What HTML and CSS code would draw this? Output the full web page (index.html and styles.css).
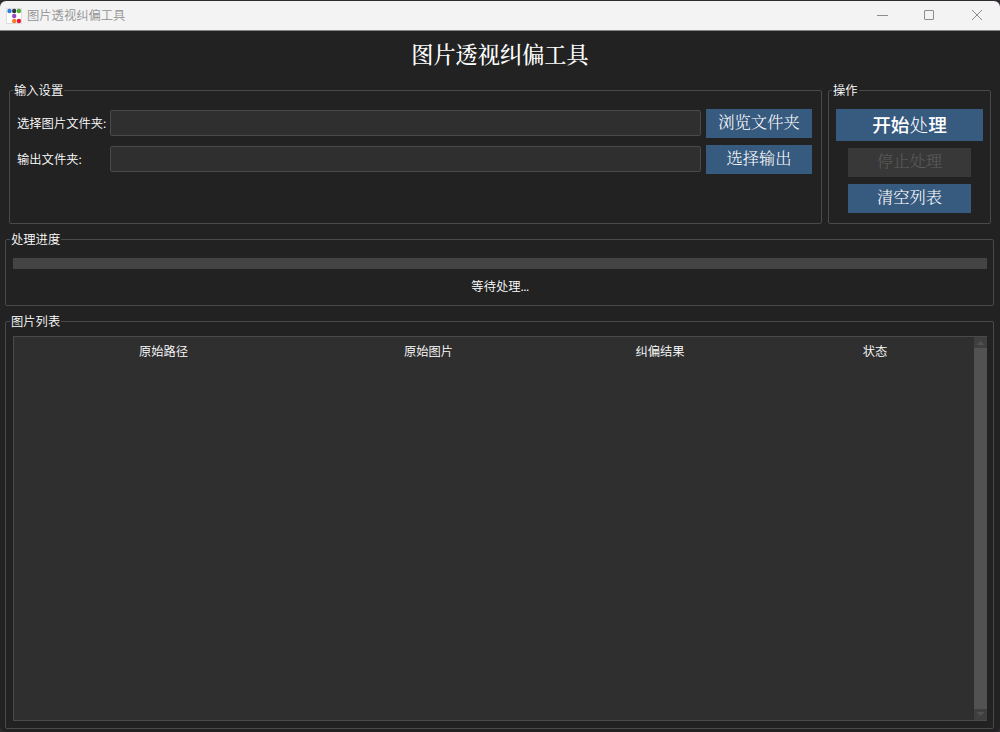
FILE: index.html
```html
<!DOCTYPE html>
<html lang="zh">
  <head>
    <meta charset="UTF-8" />
    <title>图片透视纠偏工具</title>
    <link rel="stylesheet" href="styles.css">
  </head>
  <body>
    <div class="window">
      <div class="titlebar">
        <svg class="logo" width="16" height="16" viewBox="0 0 16 16">
          <rect x="0.5" y="0.5" width="15" height="15" fill="#fff" stroke="#dedede" />
          <circle cx="3.5" cy="3" r="2.2" fill="#2f7de0" />
          <circle cx="8.2" cy="3" r="2.2" fill="#303840" />
          <circle cx="12.9" cy="3" r="2.2" fill="#4cae35" />
          <circle cx="8.2" cy="8" r="2.2" fill="#924ac0" />
          <circle cx="8.2" cy="13" r="2.2" fill="#f77a26" />
          <circle cx="12.9" cy="13" r="2.2" fill="#ed1535" />
        </svg>
        <span class="caption">图片透视纠偏工具</span>
        <svg class="controls" width="110" height="14" viewBox="0 0 110 14">
          <path d="M1 7.5H12" />
          <rect x="48.5" y="2.5" width="9" height="9" rx="0.5" />
          <path d="M96 2L106 12M106 2L96 12" />
        </svg>
      </div>

      <h1 class="heading">图片透视纠偏工具</h1>

      <div class="top">
        <fieldset class="group input-group">
          <legend>输入设置</legend>
          <div class="row">
            <label for="src">选择图片文件夹:</label>
            <input id="src" type="text" />
            <button class="btn">浏览文件夹</button>
          </div>
          <div class="row">
            <label for="out">输出文件夹:</label>
            <input id="out" type="text" />
            <button class="btn">选择输出</button>
          </div>
        </fieldset>
        <fieldset class="group action-group">
          <legend>操作</legend>
          <button class="btn start">开始<span class="thin">处</span>理</button>
          <button class="btn" disabled>停止处理</button>
          <button class="btn">清空列表</button>
        </fieldset>
      </div>

      <fieldset class="group progress-group">
        <legend>处理进度</legend>
        <div class="progress"></div>
        <div class="status">等待处理<span class="dots">...</span></div>
      </fieldset>

      <fieldset class="group list-group">
        <legend>图片列表</legend>
        <div class="list">
          <div class="list-head">
            <span>原始路径</span>
            <span>原始图片</span>
            <span>纠偏结果</span>
            <span>状态</span>
          </div>
          <div class="scrollbar">
            <svg class="arrow" width="12" height="11" viewBox="0 0 12 11"><path d="M2 8L6 4L10 8Z" /></svg>
            <svg class="arrow" width="12" height="11" viewBox="0 0 12 11"><path d="M2 3L6 7L10 3Z" /></svg>
          </div>
        </div>
      </fieldset>
    </div>
  </body>
</html>
```

FILE: styles.css
```css
* {
  margin: 0;
  padding: 0;
  box-sizing: border-box;
}
body {
  height: 732px;
  padding-top: 1px;
  overflow: hidden;
  background: #302d30;
  color: #fff;
  font: 350 12.3px/17px "Noto Sans CJK SC", sans-serif;
}
.window {
  height: 731px;
  display: flex;
  flex-direction: column;
  background: #222;
  border-radius: 6px;
  overflow: hidden;
}
.titlebar {
  flex: none;
  height: 30px;
  padding: 0 14px 0 6px;
  display: flex;
  align-items: center;
  background: #f3f3f3;
  border-bottom: 1px solid #858585;
}
.caption {
  margin-left: 5px;
  color: #929292;
}
.controls {
  margin-left: auto;
  position: relative;
  top: -1px;
  fill: none;
  stroke: #8c8c8c;
}
.heading {
  height: 51px;
  text-align: center;
  font: 500 22.2px/45px "Noto Serif CJK SC", "Noto Sans CJK SC", serif;
}
.top {
  flex: none;
  height: 142px;
  padding: 0 9px;
  display: flex;
  gap: 6px;
}
.group {
  min-width: 0;
  border: 1px solid #4a4a4a;
  border-radius: 2px;
}
.group legend {
  margin-left: -4px;
  padding: 0 1px;
}
.input-group {
  flex: 1;
  padding: 10px 9px 0 7px;
}
.row {
  height: 29px;
  margin-bottom: 7px;
  display: flex;
}
.row label {
  width: 93px;
  line-height: 29px;
  white-space: nowrap;
}
.row input {
  flex: 1;
  min-width: 0;
  height: 26px;
  margin: 1px 5px 0 0;
  background: #2f2f2f;
  border: 1px solid #4a4a4a;
  border-radius: 2px;
  color: #fff;
}
.btn {
  width: 106px;
  height: 29px;
  padding-bottom: 4px;
  background: #375a7f;
  border: none;
  color: #fff;
  font: 300 16.3px/25px "Noto Serif CJK SC", "Noto Sans CJK SC", serif;
}
.action-group {
  width: 163px;
  padding-top: 10px;
}
.action-group legend {
  margin-left: 3px;
}
.action-group .btn {
  display: block;
  width: 123px;
  margin: 0 auto 7px;
}
.action-group .start {
  width: 147px;
  height: 32px;
  padding-bottom: 2px;
  font: 500 18.7px/30px "Noto Sans CJK SC", sans-serif;
}
.start .thin {
  font-weight: 300;
}
.btn:disabled {
  background: #383838;
  color: #5c5c5c;
}
.progress-group {
  flex: none;
  height: 75px;
  margin: 7px 6px 0 5px;
  padding: 10px 6px 0 7px;
}
.progress-group legend,
.list-group legend {
  margin-left: -3px;
}
.progress {
  height: 11px;
  background: #444;
}
.status {
  margin-top: 9px;
  text-align: center;
}
.dots {
  letter-spacing: -0.6px;
}
.list-group {
  flex: none;
  height: 416px;
  margin: 7px 6px 0 5px;
  padding: 6px 6px 0 7px;
}
.list {
  height: 385px;
  display: flex;
  background: #2f2f2f;
  border: 1px solid #4a4a4a;
  border-right: none;
}
.list-head {
  flex: 1;
  height: 28px;
  display: grid;
  grid-template-columns: 299px 231px 232px 1fr;
  text-align: center;
  line-height: 28px;
}
.scrollbar {
  width: 13px;
  display: flex;
  flex-direction: column;
  justify-content: space-between;
  background: #525252;
}
.arrow {
  width: 13px;
  background: #3f3f3f;
  fill: #505050;
}
```
